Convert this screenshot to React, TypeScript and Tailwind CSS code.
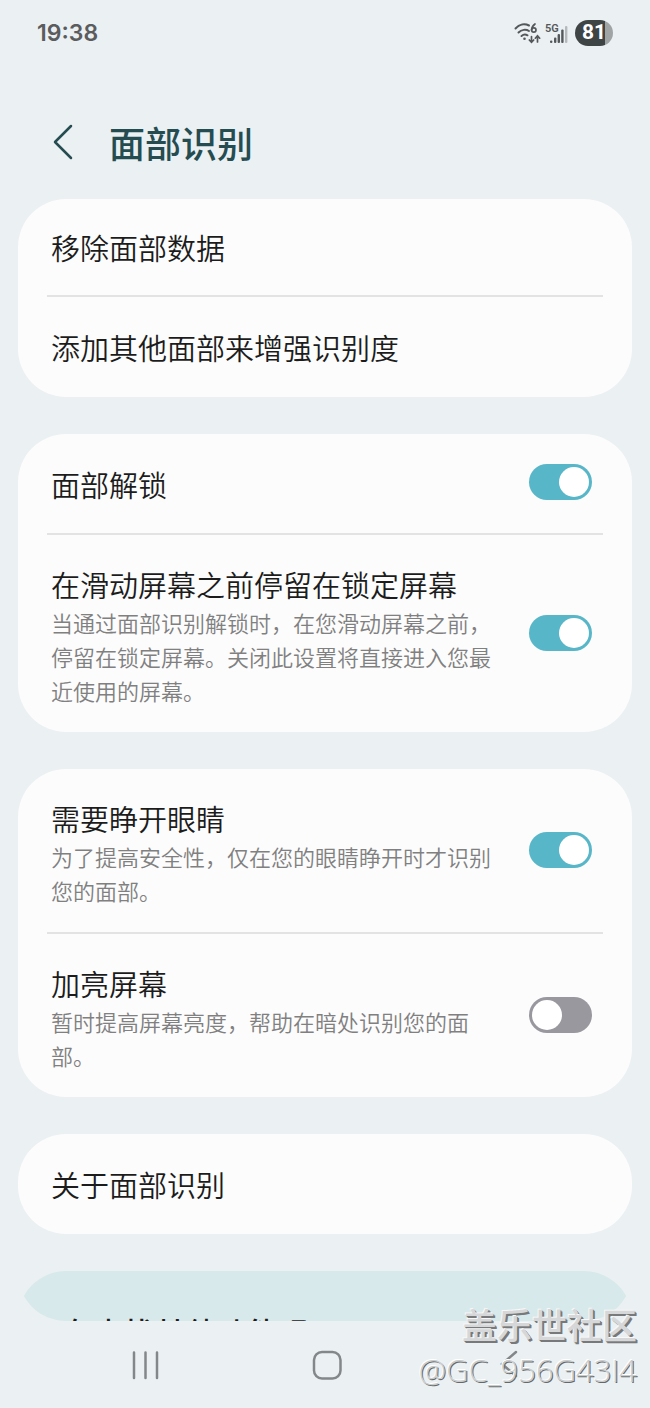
import { useState } from 'react';

interface RowProps {
    title: string;
    description?: string;
}

interface SwitchRowProps extends RowProps {
    id: string;
    defaultOn?: boolean;
    className?: string;
}

const Card = ({ children }: { children: React.ReactNode }) => (
    <section className="rounded-[48px] bg-[#fcfcfc] px-[29px]">{children}</section>
);

const Divider = () => <hr className="border-t-2 border-[#e3e3e4]" />;

const LinkRow = ({ title, className = '' }: { title: string; className?: string }) => (
    <button type="button" className={`block w-full px-1 text-left text-[29px] leading-10 ${className}`}>
        {title}
    </button>
);

const SwitchRow = ({ id, title, description, defaultOn = false, className = '' }: SwitchRowProps) => {
    const [on, setOn] = useState(defaultOn);

    return (
        <div className={`flex items-center justify-between gap-7 pr-[11px] pl-1 ${className}`}>
            <label htmlFor={id} className="flex-1">
                <span className="block text-[29px] leading-[42px]">{title}</span>
                {description && (
                    <span className="block text-[22px] leading-[34px] text-[#808081]">{description}</span>
                )}
            </label>
            <span className="relative mb-1 h-9 w-[63px] shrink-0">
                <input
                    id={id}
                    type="checkbox"
                    role="switch"
                    checked={on}
                    onChange={(e) => setOn(e.target.checked)}
                    className="peer block h-9 w-[63px] appearance-none rounded-full bg-[#99989e] checked:bg-[#57b6c8]"
                />
                <span className="pointer-events-none absolute top-[3px] left-[3px] size-[30px] rounded-full bg-white peer-checked:left-[30px]" />
            </span>
        </div>
    );
};

const WifiIcon = () => (
    <svg width="28" height="24" viewBox="0 0 28 24" fill="none" stroke="#55585a" strokeWidth="2" strokeLinecap="round">
        <path d="M1.500 7.500C5.500 3 11 2.500 15 4.500" />
        <path d="M4.500 11.500C7.500 8.500 12 8 15 10" />
        <path d="M7.500 15C9.500 13.300 11.500 13.200 13.500 14.300" />
        <circle cx="10.500" cy="17.800" r="1.300" fill="#55585a" stroke="none" />
        <path d="M21 3C18.800 4.500 17.800 6.500 17.600 9" strokeWidth="1.700" />
        <circle cx="19.800" cy="9" r="2.200" strokeWidth="1.700" />
        <path d="M17.500 15.500V21M15.300 19L17.500 21.300L19.700 19M23.500 21V15M21.300 17.200L23.500 14.800L25.700 17.200" strokeWidth="1.700" />
    </svg>
);

const SignalIcon = () => (
    <svg width="23" height="24" viewBox="0 0 23 24" fill="#55585a">
        <text x="0" y="11" fontSize="11" fontWeight="600" fontFamily="Roboto, sans-serif">5G</text>
        <rect x="5" y="19.500" width="2.400" height="2.500" rx="1" />
        <rect x="9" y="16.500" width="2.400" height="5.500" rx="1" />
        <rect x="12.600" y="13" width="2.400" height="9" rx="1" />
        <rect x="16.200" y="8.500" width="2.400" height="13.500" rx="1" />
        <rect x="20" y="5" width="2.400" height="17" rx="1" fill="#b5b9bb" />
    </svg>
);

const StatusBar = () => (
    <header className="flex h-[66px] items-center justify-between px-[37px]">
        <time className="font-[Inter] text-[23px] leading-8 font-semibold text-[#5a5c5e]">19:38</time>
        <div className="flex items-center">
            <WifiIcon />
            <span className="ml-[3px]">
                <SignalIcon />
            </span>
            <span className="ml-[7px] flex h-[26px] w-[38px] items-center justify-center rounded-full bg-linear-to-r from-[#3f4444] from-80% to-[#a0a4a5] to-80% font-[Roboto] text-[21px] font-bold text-white">
                81
            </span>
        </div>
    </header>
);

const NavBar = () => (
    <nav className="grid h-[87px] grid-cols-3 text-[#848789]">
        <button type="button" aria-label="最近" className="flex items-center justify-end pr-14">
            <svg width="30" height="30" viewBox="0 0 30 30" stroke="currentColor" strokeWidth="2.500" strokeLinecap="round">
                <path d="M3 2.500V28M14.500 2.500V28M26 2.500V28" />
            </svg>
        </button>
        <button type="button" aria-label="主屏幕" className="flex items-center justify-center">
            <svg width="36" height="32" viewBox="0 0 36 32" fill="none" stroke="currentColor" strokeWidth="2.500">
                <rect x="7" y="3" width="26.500" height="26.500" rx="8" />
            </svg>
        </button>
        <button type="button" aria-label="返回" className="flex items-center justify-start pl-16">
            <svg width="30" height="30" viewBox="0 0 30 30" fill="none" stroke="currentColor" strokeWidth="2.500" strokeLinecap="round">
                <path d="M19 2L5 14L19 26" />
            </svg>
        </button>
    </nav>
);

const Watermark = () => (
    <div className="pointer-events-none absolute right-[13px] bottom-[15px] text-right">
        <p className="text-[35px] leading-[46px] font-medium text-[#d6d7d8] [text-shadow:-1px_-1px_0_#f8f8f8,1px_1px_0_#77797a,2px_2px_0_#77797a]">
            盖乐世社区
        </p>
        <p className="font-['Open_Sans'] text-[31px] leading-[46px] font-light text-[#c9cccd] [text-shadow:-1px_-1px_0_#fff,1px_1px_0_#66696a]">
            @GC_956G43I4
        </p>
    </div>
);

export default function App() {
    return (
        <div
            lang="zh-CN"
            className="relative flex min-h-screen flex-col bg-[#ebf0f3] font-['Noto_Sans_CJK_SC',sans-serif] font-[350] text-[#1c1c1d]"
        >
            <StatusBar />

            <div className="flex items-center gap-[29px] px-12 pt-[50px] pb-[31px] text-[#254d51]">
                <button type="button" aria-label="返回">
                    <svg width="32" height="40" viewBox="0 0 32 40" fill="none" stroke="currentColor" strokeWidth="2.500" strokeLinecap="round" strokeLinejoin="round">
                        <path d="M23 4L7 20L23 36" />
                    </svg>
                </button>
                <h1 className="text-4xl leading-[52px] font-medium">面部识别</h1>
            </div>

            <main className="flex flex-col gap-[37px] px-[18px]">
                <Card>
                    <LinkRow title="移除面部数据" className="py-7" />
                    <Divider />
                    <LinkRow title="添加其他面部来增强识别度" className="py-[30px]" />
                </Card>
                <Card>
                    <SwitchRow id="unlock" title="面部解锁" defaultOn className="pt-[29px] pb-7" />
                    <Divider />
                    <SwitchRow
                        id="stay"
                        title="在滑动屏幕之前停留在锁定屏幕"
                        description="当通过面部识别解锁时，在您滑动屏幕之前，停留在锁定屏幕。关闭此设置将直接进入您最近使用的屏幕。"
                        defaultOn
                        className="pt-7 pb-[25px]"
                    />
                </Card>
                <Card>
                    <SwitchRow
                        id="eyes"
                        title="需要睁开眼睛"
                        description="为了提高安全性，仅在您的眼睛睁开时才识别您的面部。"
                        defaultOn
                        className="pt-7 pb-[25px]"
                    />
                    <Divider />
                    <SwitchRow
                        id="brighten"
                        title="加亮屏幕"
                        description="暂时提高屏幕亮度，帮助在暗处识别您的面部。"
                        className="pt-7 pb-[25px]"
                    />
                </Card>
                <Card>
                    <LinkRow title="关于面部识别" className="py-[30px]" />
                </Card>

                {/* Suggestions card, still scrolled under the bottom edge */}
                <div className="-mt-[50px] overflow-hidden rounded-b-[48px] pt-[50px]">
                    <section className="h-[50px] overflow-hidden rounded-t-[48px] bg-[#d8e9eb] px-11 pt-[41px]">
                        <h2 className="text-[31px] leading-10 font-medium">在查找其他功能吗?</h2>
                    </section>
                </div>
            </main>

            <NavBar />
            <Watermark />
        </div>
    );
}
